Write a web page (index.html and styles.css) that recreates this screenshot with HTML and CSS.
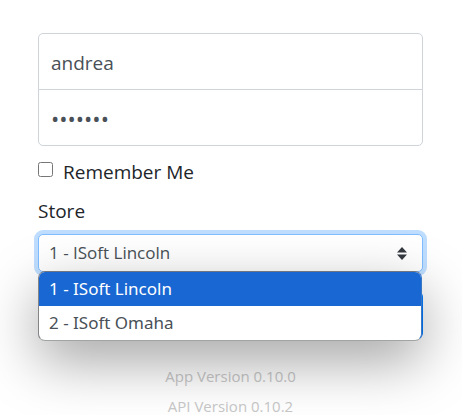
FILE: index.html
```
<!DOCTYPE html>
<html lang="en">
<head>
<meta charset="utf-8">
<title>Sign in</title>
<link rel="stylesheet" href="styles.css">
</head>
<body>
<form class="signin">
  <input class="field field-top" type="text" aria-label="Username" value="andrea">
  <input class="field field-bottom" type="password" aria-label="Password" value="isoft12">
  <label class="remember"><input type="checkbox" class="check">Remember Me</label>
  <label class="store-label" for="store">Store</label>
  <div class="store">
    <select id="store" class="select">
      <option>1 - ISoft Lincoln</option>
      <option>2 - ISoft Omaha</option>
    </select>
    <svg class="arrows" viewBox="0 0 10 13" aria-hidden="true"><path d="M5 0l5 5.500H0zM5 13l5-5.500H0z" fill="#343a40"/></svg>
    <ul class="menu">
      <li class="option selected">1 - ISoft Lincoln</li>
      <li class="option">2 - ISoft Omaha</li>
    </ul>
  </div>
  <button class="submit" type="submit" aria-label="Sign in"></button>
  <footer class="versions">
    <p class="version">App Version 0.10.0</p>
    <p class="version">API Version 0.10.2</p>
  </footer>
</form>
</body>
</html>
```
FILE: styles.css
```
* { box-sizing: border-box; }
body {
  margin: 0;
  background: #fff;
  color: #212529;
  font: 19px/28px "Open Sans", "Noto Sans", sans-serif;
  overflow: hidden;
}
.signin {
  display: flex;
  flex-direction: column;
  padding: 33px 39px 0 38px;
}
.field {
  width: 100%;
  height: 57px;
  padding: 2px 12px 0;
  border: 1px solid #ced4da;
  background: #fff;
  color: #495057;
  font: inherit;
  outline: 0;
}
.field-top { border-radius: 5px 5px 0 0; }
.field-bottom {
  margin-top: -1px;
  padding-top: 0;
  border-radius: 0 0 5px 5px;
  font-size: 22px;
}
.remember {
  display: flex;
  align-items: center;
  gap: 10px;
  margin-top: 12px;
}
.check { width: 15px; height: 15px; margin: 0 0 5px; }
.store-label { margin: 11px 0 9px; }
.store { position: relative; }
.select {
  display: block;
  width: 100%;
  height: 38px;
  padding: 0 10px;
  border: 1px solid #80bdff;
  border-radius: 5px;
  box-shadow: 0 0 0 4px #bfdeff;
  background: #fff;
  color: #495057;
  font: inherit;
  font-size: 17px;
  appearance: none;
  outline: 0;
}
.arrows {
  position: absolute;
  top: 13px;
  right: 16px;
  width: 10px;
  height: 13px;
}
.menu {
  position: absolute;
  top: 37px;
  left: 0;
  right: 1px;
  margin: 0;
  padding: 0;
  border: 1px solid #858585;
  border-top-color: #6f7680;
  border-right-color: #3a78c4;
  border-bottom-color: #a0a4a4;
  border-radius: 7px;
  background: #fff;
  box-shadow: 0 20px 56px rgba(0, 0, 0, .36);
  overflow: hidden;
  list-style: none;
}
.option {
  padding: 0 10px;
  color: #495057;
  font-family: "Noto Sans", "Open Sans", sans-serif;
  font-size: 17px;
  line-height: 34px;
}
.selected { background: #1967d2; color: #fff; }
.submit {
  height: 48px;
  margin-top: 19px;
  border: 0;
  border-radius: 6px;
  background: #007bff;
}
.versions { margin-top: 22px; text-align: center; }
.version {
  margin: 0;
  color: #c8c8c8;
  font-size: 15px;
  line-height: 30px;
}
```
